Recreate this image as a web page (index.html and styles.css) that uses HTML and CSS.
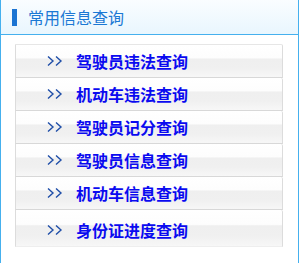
FILE: index.html
```html
<!DOCTYPE html>
<html lang="zh-CN">
<head>
<meta charset="utf-8">
<title>常用信息查询</title>
<link rel="stylesheet" href="styles.css">
</head>
<body>
<div class="panel">
  <div class="panel-head">
    <span class="marker"></span>
    <span class="title">常用信息查询</span>
  </div>
  <ul class="links">
    <li class="item"><svg class="chev" width="16" height="10" viewBox="0 0 16 10"><polyline points="1,0.5 6,5 1,9.5" /><polyline points="9,0.5 14,5 9,9.5" /></svg><span class="label">驾驶员违法查询</span></li>
    <li class="item"><svg class="chev" width="16" height="10" viewBox="0 0 16 10"><polyline points="1,0.5 6,5 1,9.5" /><polyline points="9,0.5 14,5 9,9.5" /></svg><span class="label">机动车违法查询</span></li>
    <li class="item"><svg class="chev" width="16" height="10" viewBox="0 0 16 10"><polyline points="1,0.5 6,5 1,9.5" /><polyline points="9,0.5 14,5 9,9.5" /></svg><span class="label">驾驶员记分查询</span></li>
    <li class="item"><svg class="chev" width="16" height="10" viewBox="0 0 16 10"><polyline points="1,0.5 6,5 1,9.5" /><polyline points="9,0.5 14,5 9,9.5" /></svg><span class="label">驾驶员信息查询</span></li>
    <li class="item"><svg class="chev" width="16" height="10" viewBox="0 0 16 10"><polyline points="1,0.5 6,5 1,9.5" /><polyline points="9,0.5 14,5 9,9.5" /></svg><span class="label">机动车信息查询</span></li>
    <li class="item item-last"><svg class="chev" width="16" height="10" viewBox="0 0 16 10"><polyline points="1,0.5 6,5 1,9.5" /><polyline points="9,0.5 14,5 9,9.5" /></svg><span class="label">身份证进度查询</span></li>
  </ul>
</div>
</body>
</html>
```
FILE: styles.css
```css
html, body {
  margin: 0;
  padding: 0;
  background: #ffffff;
}
body {
  font-family: "Noto Sans CJK SC", "Noto Sans", sans-serif;
}
.panel {
  width: 299px;
  height: 263px;
  box-sizing: border-box;
  border-left: 1px solid #45b0ee;
  border-right: 1px solid #45b0ee;
  background: #ffffff;
}
.panel-head {
  height: 35px;
  border-bottom: 1px solid #45b0ee;
  background: linear-gradient(to bottom, #fafdff 0%, #e9f6fe 100%);
  display: flex;
  align-items: center;
  box-sizing: border-box;
  padding-left: 11px;
}
.marker {
  width: 5px;
  height: 17px;
  background: #1b74d2;
  margin-right: 11px;
  margin-top: 1px;
}
.title {
  font-size: 16px;
  color: #1b78d4;
  line-height: 1;
}
.links {
  list-style: none;
  margin: 0;
  padding: 9px 0 0 14px;
}
.item {
  width: 268px;
  height: 34px;
  box-sizing: border-box;
  border: 1px solid #dcdcdc;
  border-top-color: #e6e6e6;
  border-bottom-color: #d8d8d8;
  border-radius: 0 2px 0 0;
  background: linear-gradient(to bottom, #ffffff 0%, #fdfdfd 40%, #efefef 44%, #f0f0f0 72%, #f7f7f7 100%);
  display: flex;
  align-items: center;
  padding-left: 31px;
}
.item + .item {
  border-top: none;
  height: 33px;
}
.item.item-last {
  height: 37px;
  padding-top: 4px;
  border-bottom-color: #eeeeee;
}
.chev {
  fill: none;
  stroke: #1f4ea8;
  stroke-width: 1.4;
  margin-right: 13px;
  flex: none;
}
.label {
  font-size: 16px;
  font-weight: bold;
  color: #0a0af0;
  line-height: 1;
}
```
